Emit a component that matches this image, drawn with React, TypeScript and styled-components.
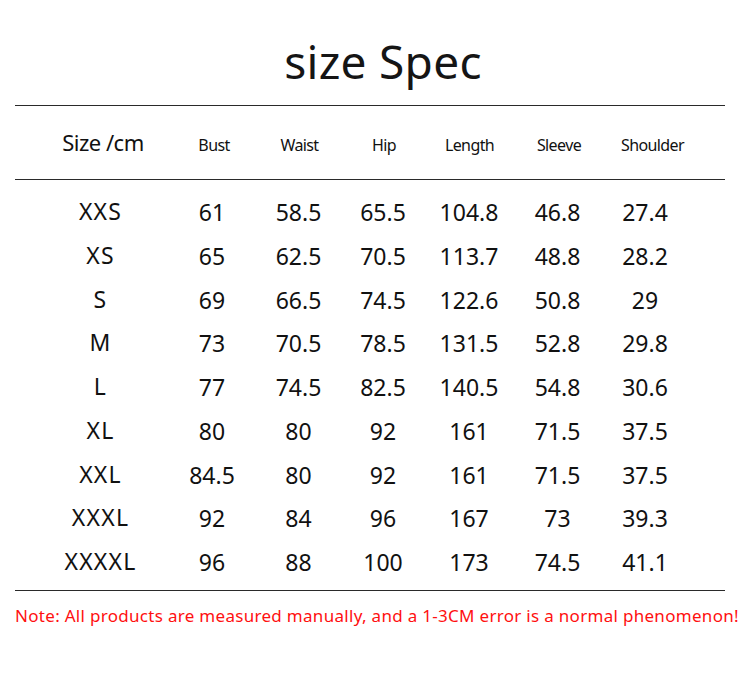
import React from "react";
import styled, { createGlobalStyle } from "styled-components";

const Global = createGlobalStyle`
  html, body { margin: 0; padding: 0; background: #ffffff; }
  body { font-family: "Noto Sans", "Open Sans", sans-serif; color: #111; }
`;

const Page = styled.div`
  width: 750px;
  height: 700px;
  display: flex;
  flex-direction: column;
  background: #fff;
`;

const TitleBar = styled.div`
  display: flex;
  justify-content: center;
  padding: 33px 0 0 16px;
  height: 56px;
  margin-bottom: 16px;
`;

const Title = styled.h1`
  margin: 0;
  font-weight: 400;
  font-size: 46px;
  line-height: 56px;
  color: #151515;
  letter-spacing: 0.3px;
`;

const Table = styled.div`
  margin-left: 15px;
  width: 710px;
  display: flex;
  flex-direction: column;
`;

const HEAD_COLS = "176px 46px 125px 44px 127px 52px 135px";
const BODY_COLS = "171px 52px 121px 48px 124px 53px 122px";

const HeadRow = styled.div`
  display: grid;
  grid-template-columns: ${HEAD_COLS};
  align-items: baseline;
  box-sizing: border-box;
  height: 75px;
  padding-top: 25px;
  border-top: 1px solid #2a2a2a;
  border-bottom: 1px solid #2a2a2a;
`;

const HeadCell = styled.div<{ $main?: boolean }>`
  text-align: center;
  white-space: nowrap;
  font-size: ${(p) => (p.$main ? "22px" : "16px")};
  line-height: ${(p) => (p.$main ? "22px" : "16px")};
  letter-spacing: ${(p) => (p.$main ? "-0.5px" : "-0.6px")};
  color: #111;
`;

const Body = styled.div`
  display: flex;
  flex-direction: column;
  padding: 11px 0 5px;
  border-bottom: 1px solid #2a2a2a;
`;

const Row = styled.div`
  display: grid;
  grid-template-columns: ${BODY_COLS};
  height: 43.75px;
  align-items: center;
`;

const Cell = styled.div<{ $size?: boolean }>`
  text-align: center;
  white-space: nowrap;
  font-size: 23px;
  line-height: 43.75px;
  color: #111;
  letter-spacing: ${(p) => (p.$size ? "1.2px" : "0")};
  margin-top: ${(p) => (p.$size ? "-2px" : "0")};
`;

const Note = styled.p`
  margin: 15px 0 0 15px;
  font-size: 17px;
  line-height: 20px;
  color: #ff1010;
  white-space: nowrap;
  letter-spacing: 0.3px;
`;

const headers = ["Size /cm", "Bust", "Waist", "Hip", "Length", "Sleeve", "Shoulder"];

const rows: string[][] = [
  ["XXS", "61", "58.5", "65.5", "104.8", "46.8", "27.4"],
  ["XS", "65", "62.5", "70.5", "113.7", "48.8", "28.2"],
  ["S", "69", "66.5", "74.5", "122.6", "50.8", "29"],
  ["M", "73", "70.5", "78.5", "131.5", "52.8", "29.8"],
  ["L", "77", "74.5", "82.5", "140.5", "54.8", "30.6"],
  ["XL", "80", "80", "92", "161", "71.5", "37.5"],
  ["XXL", "84.5", "80", "92", "161", "71.5", "37.5"],
  ["XXXL", "92", "84", "96", "167", "73", "39.3"],
  ["XXXXL", "96", "88", "100", "173", "74.5", "41.1"],
];

export default function App() {
  return (
    <Page>
      <Global />
      <TitleBar>
        <Title>size Spec</Title>
      </TitleBar>
      <Table>
        <HeadRow>
          {headers.map((h, i) => (
            <HeadCell key={h} $main={i === 0}>
              {h}
            </HeadCell>
          ))}
        </HeadRow>
        <Body>
          {rows.map((r) => (
            <Row key={r[0]}>
              {r.map((v, i) => (
                <Cell key={i} $size={i === 0}>
                  {v}
                </Cell>
              ))}
            </Row>
          ))}
        </Body>
      </Table>
      <Note>Note: All products are measured manually, and a 1-3CM error is a normal phenomenon!</Note>
    </Page>
  );
}
